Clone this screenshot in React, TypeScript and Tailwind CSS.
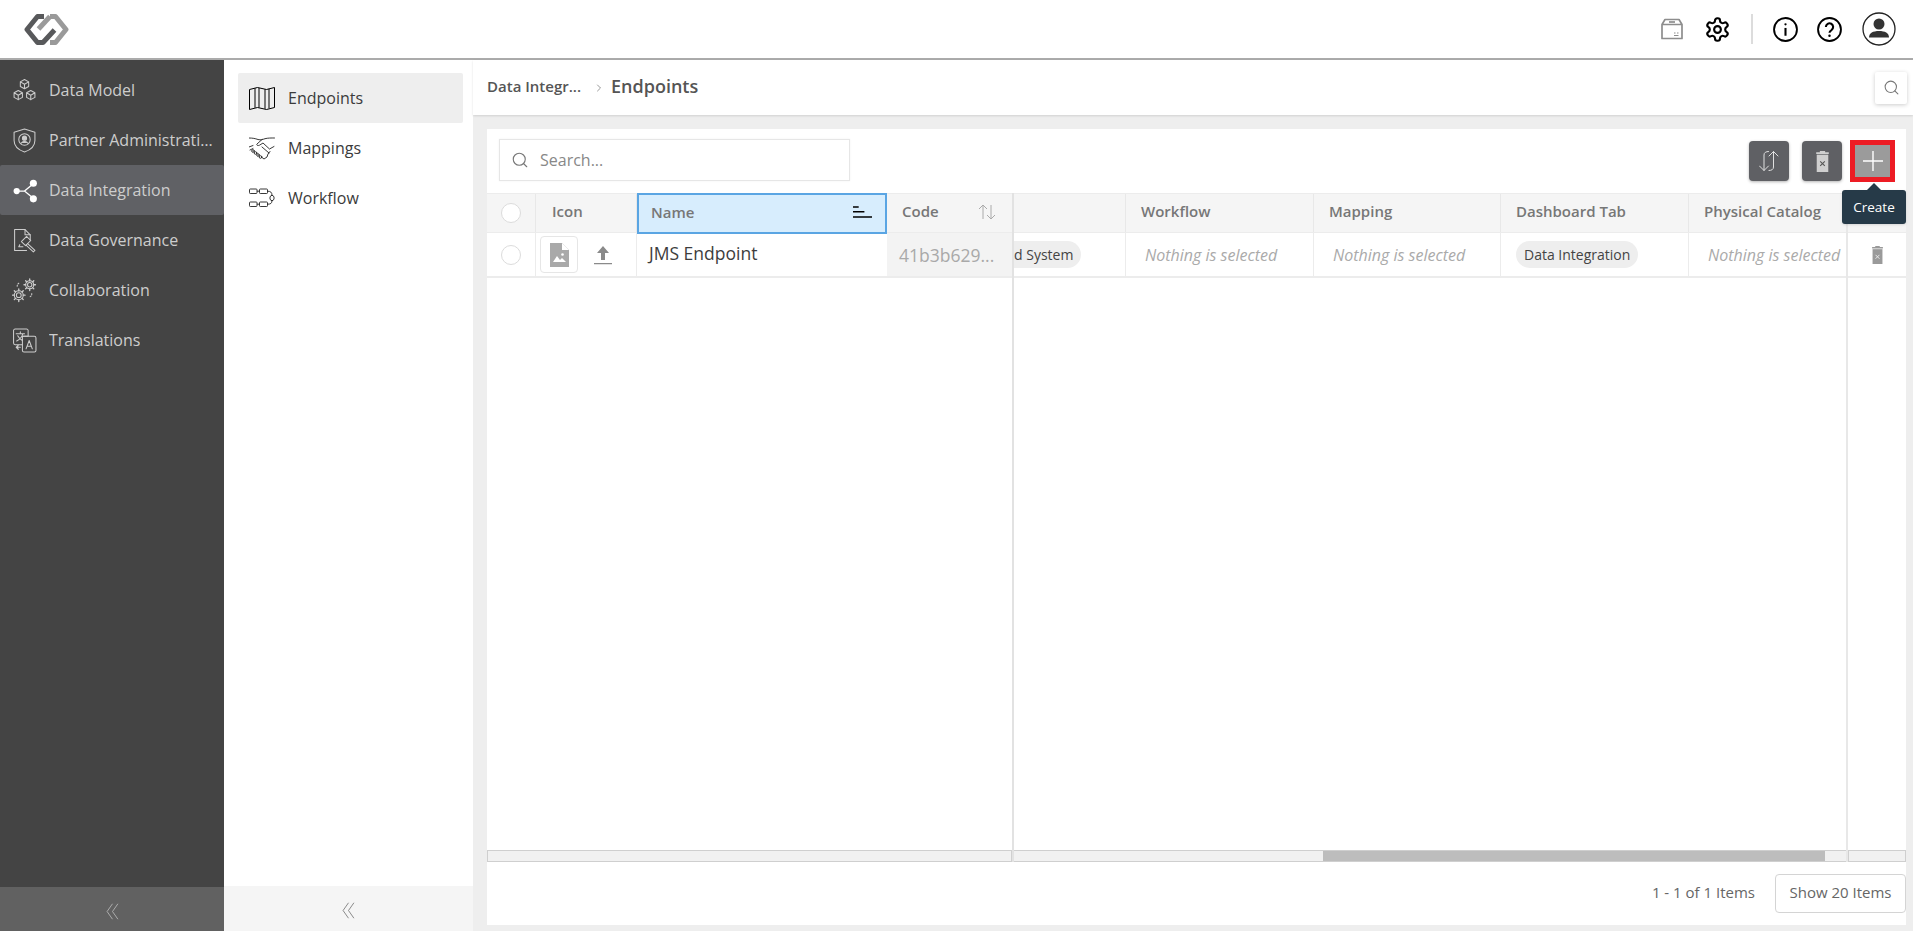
import React from "react";
import { Search, ChevronRight } from "lucide-react";

const sv = "fill-none stroke-current";

const Ico = ({ children, c = "" }: { children: React.ReactNode; c?: string }) => (
  <svg viewBox="0 0 24 24" className={`w-[25px] h-[25px] shrink-0 ${sv} ${c}`} strokeWidth={1} strokeLinejoin="round" strokeLinecap="round">
    {children}
  </svg>
);

const DataModelIcon = () => (
  <Ico>
    <path d="M12 1.500l4 2.200v4.400l-4 2.200-4-2.200V3.700zM8 3.700l4 2.300 4-2.300M12 6v4.300" />
    <path d="M6 12l4 2.200v4.400l-4 2.200-4-2.200v-4.400zM2 14.200l4 2.300 4-2.300M6 16.500v4.300" />
    <path d="M18 12l4 2.200v4.400l-4 2.200-4-2.200v-4.400zM14 14.200l4 2.300 4-2.300M18 16.500v4.300" />
  </Ico>
);
const PartnerIcon = () => (
  <Ico>
    <path d="M12 1l10 3v8c0 5-4 9-10 11C6 21 2 17 2 12V4z" />
    <circle cx="12" cy="11" r="5.500" />
    <circle cx="12" cy="9.800" r="2" fill="currentColor" />
    <path d="M9 14.500c.6-2 5.400-2 6 0" fill="currentColor" />
  </Ico>
);
const IntegrationIcon = () => (
  <svg viewBox="0 0 24 24" className="w-[25px] h-[25px] shrink-0 text-white" fill="currentColor" stroke="currentColor" strokeWidth={1.200}>
    <path d="M4.500 12.500h7.500L21 5M12 12.500l9 7.500" fill="none" />
    <circle cx="4.500" cy="12.500" r="3" stroke="none" />
    <circle cx="20.500" cy="5" r="3.400" stroke="none" />
    <circle cx="20.500" cy="20" r="3.400" stroke="none" />
  </svg>
);
const GovernanceIcon = () => (
  <Ico>
    <path d="M14 21.500H2.500V1.500h10l5 5v5" />
    <path d="M12.500 1.500v5h5" />
    <path d="M9 13l5-5 4 4-5 5zM10.500 18h-4l1-2" />
    <path d="M15 15l7 6.500-1.500 1.500-7-6.500" />
  </Ico>
);
const Gear = ({ cx, cy, r }: { cx: number; cy: number; r: number }) => (
  <g>
    <circle cx={cx} cy={cy} r={r * 0.42} />
    <circle cx={cx} cy={cy} r={r * 0.78} />
    {[0, 45, 90, 135, 180, 225, 270, 315].map((a) => (
      <line
        key={a}
        x1={cx + Math.cos((a * Math.PI) / 180) * r * 0.78}
        y1={cy + Math.sin((a * Math.PI) / 180) * r * 0.78}
        x2={cx + Math.cos((a * Math.PI) / 180) * r * 1.1}
        y2={cy + Math.sin((a * Math.PI) / 180) * r * 1.1}
        strokeWidth={1.300}
      />
    ))}
  </g>
);
const CollabIcon = () => (
  <Ico>
    <Gear cx={6.500} cy={16.500} r={5.500} />
    <Gear cx={17} cy={6.500} r={5} />
    <path d="M5 8c0-2 1-3 3-3.500M19 15c0 2-1 3-3 3.500" strokeDasharray="1 1.500" />
  </Ico>
);
const TranslateIcon = () => (
  <Ico>
    <path d="M3 1h11a1.500 1.500 0 0 1 1.500 1.500V8H10v8H3a1.500 1.500 0 0 1-1.500-1.500v-12A1.500 1.500 0 0 1 3 1z" />
    <path d="M11 8h10.500A1.500 1.500 0 0 1 23 9.500v12a1.500 1.500 0 0 1-1.500 1.500h-10A1.500 1.500 0 0 1 10 21.500V16" />
    <path d="M4 5.500h8M8 3.500v2M10.500 5.500c-.8 3-3 5.500-6 7M5.500 7.500c1 2 2.500 3.500 4.500 4.500" />
    <path d="M13.500 20l3-8 3 8M14.500 17.500h4" />
    <path d="M4 18.500h4M6 16.500l-2 2 2 2" fill="currentColor" />
  </Ico>
);

const MapIcon = () => (
  <svg viewBox="0 0 26 23" className="w-[26px] h-[23px] shrink-0 text-black fill-none stroke-current" strokeWidth={1} strokeLinejoin="round">
    <path d="M.5 2.500l8-2 9 2 8-2v20l-8 2-9-2-8 2z" />
    <path d="M6 1.200v19.600M10 1v19.600M16 2.300v19.500M20 1.800v19.500" />
  </svg>
);
const HandshakeIcon = () => (
  <svg viewBox="0 0 26 23" className="w-[26px] h-[23px] shrink-0 text-[#222] fill-none stroke-current" strokeWidth={0.900} strokeLinejoin="round" strokeLinecap="round">
    <path d="M0 1c4 0 6 .5 9 1.500 3 .8 4.500 0 7-.8 3-.8 6-.7 9.500-.7" />
    <path d="M13 2.500L8 7c-1 1.200 1 2 2.500 1.200L14 6l6.500 6 4.500-2.500" />
    <path d="M0 10l4-1.500" />
    <path d="M1 13l3-1.500" />
    <circle cx="4" cy="14" r="1.300" />
    <circle cx="6.500" cy="16" r="1.300" />
    <circle cx="9" cy="18" r="1.300" />
    <circle cx="11.500" cy="20" r="1.300" />
    <path d="M13 20.500l2 1.500 3-2 1-3 2-2.500M13 10l7 6" />
  </svg>
);
const WorkflowIcon = () => (
  <svg viewBox="0 0 26 23" className="w-[26px] h-[23px] shrink-0 text-[#222] fill-none stroke-current" strokeWidth={0.900}>
    <rect x="0.500" y="2" width="7.500" height="4.500" rx="0.800" />
    <rect x="10.500" y="2" width="8" height="4.500" rx="0.800" />
    <rect x="0.500" y="15" width="7.500" height="4.500" rx="0.800" />
    <rect x="10.500" y="15" width="8" height="4.500" rx="0.800" />
    <path d="M22 8.500h2l1 1.500v2l-1 1.500h-2l-1-1.500v-2z" />
    <path d="M8 4.200h2.500M8 17.200h2.500M18.500 4.200c3 0 4.500 1 4.500 4.300M18.500 17.200c3 0 4.500-.8 4.500-3.700" />
  </svg>
);

const Logo = () => (
  <svg viewBox="0 0 45 31" className="w-[45px] h-[31px]" fill="none" strokeWidth={5} strokeLinejoin="round">
    <path d="M26 2.500 H31.500 L42 15.500 L31.500 28.500 H26" stroke="#9a9a9a" />
    <path d="M26 2.500 L14.500 15" stroke="#9a9a9a" />
    <path d="M20 2.500 H13.500 L3 15.500 L13.500 28.500 H19 L30.500 16" stroke="#58595b" />
  </svg>
);

const nav = [
  { label: "Data Model", icon: <DataModelIcon /> },
  { label: "Partner Administration", icon: <PartnerIcon /> },
  { label: "Data Integration", icon: <IntegrationIcon />, active: true },
  { label: "Data Governance", icon: <GovernanceIcon /> },
  { label: "Collaboration", icon: <CollabIcon /> },
  { label: "Translations", icon: <TranslateIcon /> },
];

const TrashX = ({ c = "", x = "#555" }: { c?: string; x?: string }) => (
  <svg viewBox="0 0 14 20" className={c}>
    <path d="M4.500 1.200V0h5v1.200H13V2.800H1V1.200z" fill="currentColor" />
    <path d="M1.500 3.500h11V20h-11z" fill="currentColor" />
    <path d="M4.800 9.800l4.400 4.400M9.200 9.800l-4.400 4.400" stroke={x} strokeWidth={1} />
  </svg>
);

const Radio = () => <span className="block w-[20px] h-[20px] rounded-full bg-white border border-[#dcdcdc]" />;

const Th = ({ w, children, last = false }: { w: string; children?: React.ReactNode; last?: boolean }) => (
  <div className={`${w} shrink-0 h-full flex items-center px-[15px] pb-[3px] text-[15px] font-semibold text-[#777] whitespace-nowrap ${last ? "" : "border-r border-[#e8e8e8]"}`}>
    {children}
  </div>
);

const Nothing = () => <span className="text-[16px] italic text-[#aaa] whitespace-nowrap">Nothing is selected</span>;

const Td = ({ w, children, last = false }: { w: string; children?: React.ReactNode; last?: boolean }) => (
  <div className={`${w} shrink-0 h-full flex items-center pl-[19px] ${last ? "overflow-hidden" : "border-r border-[#ececec]"}`}>{children}</div>
);

const Chevrons = () => (
  <svg viewBox="0 0 16 22" className="w-[15px] h-[17px] fill-none stroke-current" strokeWidth={1.100}>
    <path d="M8 1L1 11l7 10M15 1L8 11l7 10" />
  </svg>
);

export default function App() {
  return (
    <div className="w-[1913px] h-[931px] flex flex-col overflow-hidden bg-white font-['Open_Sans',sans-serif]">
      <header className="h-[60px] shrink-0 bg-white border-b-2 border-[#ababab] flex items-center pl-[24px] pr-[17px]">
        <Logo />
        <div className="ml-auto flex items-center">
          <svg viewBox="0 0 22 22" className="w-[22px] h-[22px] text-[#8d8d8d] fill-none stroke-current" strokeWidth={1.700} strokeLinejoin="round">
            <path d="M4 1.500h14l3 5v14H1v-14zM1 6.500h20" />
            <path d="M8 4h6" />
            <path d="M13 15h1.500M16 15h1.500M13 17.500h4.500" strokeWidth={1.200} />
          </svg>
          <svg viewBox="0 0 24 24" className="ml-[21px] w-[27px] h-[27px] text-black fill-none stroke-current" strokeWidth={1.900} strokeLinejoin="round">
            <path d="M12.220 2h-.440a2 2 0 0 0-2 2v.180a2 2 0 0 1-1 1.730l-.430.250a2 2 0 0 1-2 0l-.150-.080a2 2 0 0 0-2.730.730l-.220.380a2 2 0 0 0 .730 2.730l.150.100a2 2 0 0 1 1 1.720v.510a2 2 0 0 1-1 1.740l-.150.090a2 2 0 0 0-.730 2.730l.220.380a2 2 0 0 0 2.730.730l.150-.080a2 2 0 0 1 2 0l.430.250a2 2 0 0 1 1 1.730V20a2 2 0 0 0 2 2h.440a2 2 0 0 0 2-2v-.180a2 2 0 0 1 1-1.730l.430-.250a2 2 0 0 1 2 0l.150.080a2 2 0 0 0 2.730-.730l.220-.390a2 2 0 0 0-.730-2.730l-.150-.080a2 2 0 0 1-1-1.740v-.500a2 2 0 0 1 1-1.740l.150-.090a2 2 0 0 0 .730-2.730l-.220-.380a2 2 0 0 0-2.730-.730l-.150.080a2 2 0 0 1-2 0l-.430-.250a2 2 0 0 1-1-1.730V4a2 2 0 0 0-2-2z" />
            <circle cx="12" cy="12" r="3" />
          </svg>
          <span className="ml-[20px] w-[2px] h-[30px] bg-[#dcdcdc]" />
          <svg viewBox="0 0 24 24" className="ml-[20px] w-[25px] h-[25px] text-black fill-none stroke-current" strokeWidth={1.800}>
            <circle cx="12" cy="12" r="11" />
            <circle cx="12" cy="7" r="1.100" fill="currentColor" stroke="none" />
            <path d="M12 10.500v7.500" strokeWidth={2} />
          </svg>
          <svg viewBox="0 0 24 24" className="ml-[19px] w-[25px] h-[25px] text-black fill-none stroke-current" strokeWidth={1.800}>
            <circle cx="12" cy="12" r="11" />
            <path d="M8.500 9.500a3.500 3.500 0 1 1 5.400 3c-1.300.8-1.900 1.500-1.900 2.500" strokeWidth={2} />
            <circle cx="12" cy="18" r="1.200" fill="currentColor" stroke="none" />
          </svg>
          <svg viewBox="0 0 34 34" className="ml-[20px] w-[34px] h-[34px]">
            <circle cx="17" cy="17" r="16" fill="none" stroke="#222" strokeWidth={1.300} />
            <circle cx="17" cy="12" r="5.500" fill="#333" />
            <path d="M7 25.500c0-4.500 4-6.500 10-6.500s10 2 10 6.500z" fill="#333" />
          </svg>
        </div>
      </header>

      <div className="flex-1 min-h-0 flex">
        <aside className="w-[224px] shrink-0 bg-[#444444] flex flex-col">
          <nav className="flex-1 pt-[5px]">
            {nav.map((n) => (
              <div
                key={n.label}
                className={`h-[50px] flex items-center pl-[12px] pr-[8px] gap-[12px] text-[16px] ${n.active ? "bg-[#606165] rounded-[2px]" : ""} text-[#cdcdcd]`}
              >
                {n.icon}
                <span className="truncate min-w-0 pb-[1px]">{n.label}</span>
              </div>
            ))}
          </nav>
          <div className="h-[44px] bg-[#616161] flex items-center justify-center pt-[4px] text-[#b9b9b9]">
            <Chevrons />
          </div>
        </aside>

        <div className="w-[249px] shrink-0 bg-white flex flex-col">
          <div className="flex-1 pt-[13px] px-[14px] pr-[10px]">
            {[
              { label: "Endpoints", icon: <MapIcon />, active: true },
              { label: "Mappings", icon: <HandshakeIcon /> },
              { label: "Workflow", icon: <WorkflowIcon /> },
            ].map((i) => (
              <div
                key={i.label}
                className={`h-[50px] flex items-center pl-[11px] gap-[13px] text-[16px] text-[#3b3b3b] rounded-[2px] ${i.active ? "bg-[#eeeeee]" : ""}`}
              >
                {i.icon}
                <span className="pb-[1px]">{i.label}</span>
              </div>
            ))}
          </div>
          <div className="h-[45px] bg-[#f5f5f5] flex items-center justify-center pt-[3px] text-[#777]">
            <Chevrons />
          </div>
        </div>

        <main className="flex-1 min-w-0 bg-[#eeeeee] flex flex-col">
          <div className="h-[55px] shrink-0 bg-white flex items-center pl-[14px] pr-[6px] shadow-[0_1px_2px_rgba(0,0,0,0.12)]">
            <span className="text-[15px] font-semibold text-[#555] pb-[2px]">Data Integr...</span>
            <ChevronRight className="w-[12px] h-[12px] ml-[12px] mr-[6px] text-[#777]" strokeWidth={1.500} />
            <span className="text-[18px] font-semibold text-[#555] pb-[2px]">Endpoints</span>
            <div className="ml-auto w-[32px] h-[32px] bg-white rounded-[2px] shadow-[0_1px_4px_rgba(0,0,0,0.2)] flex items-center justify-center">
              <Search className="w-[17px] h-[17px] text-[#777]" strokeWidth={1.500} />
            </div>
          </div>

          <section className="relative flex-1 min-h-0 mt-[14px] ml-[14px] mr-[7px] mb-[6px] bg-white flex flex-col">
            <div className="h-[64px] shrink-0 flex items-start pt-[10px] pl-[12px] pr-[11px]">
              <div className="w-[351px] h-[42px] border border-[#e6e6e6] shadow-[0_0_2px_rgba(0,0,0,0.06)] flex items-center pl-[11px] gap-[11px]">
                <Search className="w-[18px] h-[18px] text-[#777]" strokeWidth={1.500} />
                <span className="text-[16px] text-[#888] pb-[1px]">Search...</span>
              </div>
              <div className="ml-auto flex items-center pt-[1px]">
                <button className="w-[40px] h-[40px] rounded-[4px] bg-[#5f6064] shadow-[0_1px_3px_rgba(0,0,0,0.3)] flex items-center justify-center text-[#e0e0e0]">
                  <svg viewBox="0 0 20 20" className="w-[20px] h-[20px] fill-none stroke-current" strokeWidth={1} strokeLinecap="round">
                    <path d="M9.500 .500C7 .500 5 1.500 5 4v15.500L.5 15M5 19.500L9.500 15" />
                    <path d="M10 19.500c2.500 0 4.500-1 4.500-3.500V.500L10 5M14.500 .500L19 5" />
                  </svg>
                </button>
                <button className="ml-[13px] w-[40px] h-[40px] rounded-[4px] bg-[#5f6064] shadow-[0_1px_3px_rgba(0,0,0,0.3)] flex items-center justify-center text-[#cfcfcf]">
                  <TrashX c="w-[15px] h-[21px]" />
                </button>
                <button className="ml-[8px] w-[35px] h-[32px] box-content border-[5px] border-[#ed1c24] bg-[#9b9b9b] flex items-center justify-center text-white">
                  <svg viewBox="0 0 20 20" className="w-[20px] h-[20px] stroke-current" strokeWidth={1.400}>
                    <path d="M10 0v20M0 10h20" />
                  </svg>
                </button>
              </div>
            </div>

            <div className="flex-1 min-h-0 flex">
              <div className="w-[525px] shrink-0 flex flex-col border-r-2 border-[#e2e2e2] box-content">
                <div className="h-[40px] shrink-0 flex bg-[#f5f5f5] border-y border-[#ececec]">
                  <div className="w-[49px] shrink-0 flex items-center justify-center border-r border-[#e8e8e8]"><Radio /></div>
                  <div className="w-[101px] shrink-0 h-full flex items-center pl-[16px] pb-[3px] text-[15px] font-semibold text-[#777] border-r border-[#e8e8e8]">Icon</div>
                  <div className="w-[250px] shrink-0 h-[41px] -my-[1px] border-2 border-[#5aa5e3] bg-[#d7edfd] flex items-center pl-[12px] pr-[13px] pb-[3px] text-[15px] font-semibold text-[#777]">
                    <span>Name</span>
                    <svg viewBox="0 0 20 13" className="ml-auto w-[19px] h-[13px] text-black fill-current">
                      <path d="M0 0h6v1.500H0zM0 5h12v1.500H0zM0 10.500h20V12H0z" />
                    </svg>
                  </div>
                  <div className="w-[125px] shrink-0 h-full flex items-center pl-[15px] pr-[16px] pb-[3px] text-[15px] font-semibold text-[#777]">
                    <span>Code</span>
                    <svg viewBox="0 0 18 16" className="ml-auto w-[18px] h-[16px] text-[#aaa] fill-none stroke-current" strokeWidth={1}>
                      <path d="M5 15V1M1 5l4-4 4 4" />
                      <path d="M13 1v14M9 11l4 4 4-4" />
                    </svg>
                  </div>
                </div>
                <div className="h-[45px] shrink-0 flex border-b-2 border-[#ececec]">
                  <div className="w-[49px] shrink-0 flex items-center justify-center border-r border-[#ececec]"><Radio /></div>
                  <div className="w-[101px] shrink-0 flex items-center pl-[4px] border-r border-[#ececec]">
                    <div className="w-[38px] h-[37px] border border-[#e6e6e6] rounded-[4px] flex items-center justify-center">
                      <svg viewBox="0 0 19 24" className="w-[19px] h-[24px]">
                        <path d="M0 0h12l7 7v17H0z" fill="#a9a9a9" />
                        <path d="M12 0l7 7h-7z" fill="#fff" />
                        <path d="M3 19l4-6 3 4 2-2 4 4z" fill="#fff" />
                        <circle cx="12.500" cy="11.500" r="1.300" fill="#fff" />
                      </svg>
                    </div>
                    <svg viewBox="0 0 20 20" className="ml-[15px] w-[20px] h-[20px] text-[#8a8a8a] fill-current">
                      <path d="M10 1l6 7h-4v7H8V8H4zM1 18h18v1.300H1z" />
                    </svg>
                  </div>
                  <div className="w-[250px] shrink-0 flex items-center pl-[12px] pb-[3px] text-[17.500px] text-[#3d3d3d]">JMS Endpoint</div>
                  <div className="w-[125px] shrink-0 flex items-center pl-[12px] pt-[2px] text-[17.500px] text-[#a9a9a9] bg-[#f3f3f3]">41b3b629...</div>
                </div>
                <div className="flex-1" />
                <div className="h-[12px] shrink-0 bg-[#f1f1f1] border border-[#cfcfcf]" />
              </div>

              <div className="flex-1 min-w-0 flex flex-col overflow-hidden">
                <div className="h-[40px] shrink-0 flex bg-[#f5f5f5] border-y border-[#ececec]">
                  <Th w="w-[112px]" />
                  <Th w="w-[188px]">Workflow</Th>
                  <Th w="w-[187px]">Mapping</Th>
                  <Th w="w-[188px]">Dashboard Tab</Th>
                  <Th w="w-[157px]" last>Physical Catalog</Th>
                </div>
                <div className="h-[45px] shrink-0 flex border-b-2 border-[#ececec]">
                  <div className="w-[112px] shrink-0 h-full flex items-center border-r border-[#ececec]">
                    <span className="h-[27px] flex items-center pr-[8px] pb-[1px] rounded-r-full bg-[#eeeeee] text-[14px] text-[#444]">d System</span>
                  </div>
                  <Td w="w-[188px]"><Nothing /></Td>
                  <Td w="w-[187px]"><Nothing /></Td>
                  <div className="w-[188px] shrink-0 h-full flex items-center pl-[15px] border-r border-[#ececec]">
                    <span className="h-[27px] flex items-center px-[8px] pb-[1px] rounded-full bg-[#eeeeee] text-[14px] text-[#444]">Data Integration</span>
                  </div>
                  <Td w="w-[157px]" last><Nothing /></Td>
                </div>
                <div className="flex-1" />
                <div className="h-[12px] shrink-0 bg-[#f1f1f1] border-y border-[#cfcfcf] pl-[309px]">
                  <div className="w-[502px] h-full bg-[#bdbdbd]" />
                </div>
              </div>

              <div className="w-[58px] shrink-0 flex flex-col border-l-2 border-[#e8e8e8] box-content">
                <div className="h-[40px] shrink-0 bg-[#f5f5f5] border-y border-[#ececec]" />
                <div className="h-[45px] shrink-0 flex items-center justify-center border-b-2 border-[#ececec] text-[#9a9a9a]">
                  <TrashX c="w-[13px] h-[18px]" x="#eeeeee" />
                </div>
                <div className="flex-1" />
                <div className="h-[12px] shrink-0 bg-[#f1f1f1] border border-[#cfcfcf]" />
              </div>
            </div>

            <div className="h-[63px] shrink-0 flex items-start justify-end pt-[12px]">
              <span className="h-[39px] flex items-center pb-[2px] text-[15px] text-[#666]">1 - 1 of 1 Items</span>
              <button className="ml-[20px] w-[131px] h-[39px] pb-[2px] border border-[#d4d4d4] rounded-[4px] bg-white text-[15px] text-[#666]">Show 20 Items</button>
            </div>

            <div className="absolute right-0 top-[61px] w-[64px] h-[34px] bg-[#263a48] rounded-[3px] shadow flex items-center justify-center text-[13.500px] text-white">
              Create
              <span className="absolute -top-[7px] left-[25px] w-0 h-0 border-x-[7px] border-x-transparent border-b-[7px] border-b-[#263a48]" />
            </div>
          </section>
        </main>
      </div>
    </div>
  );
}
